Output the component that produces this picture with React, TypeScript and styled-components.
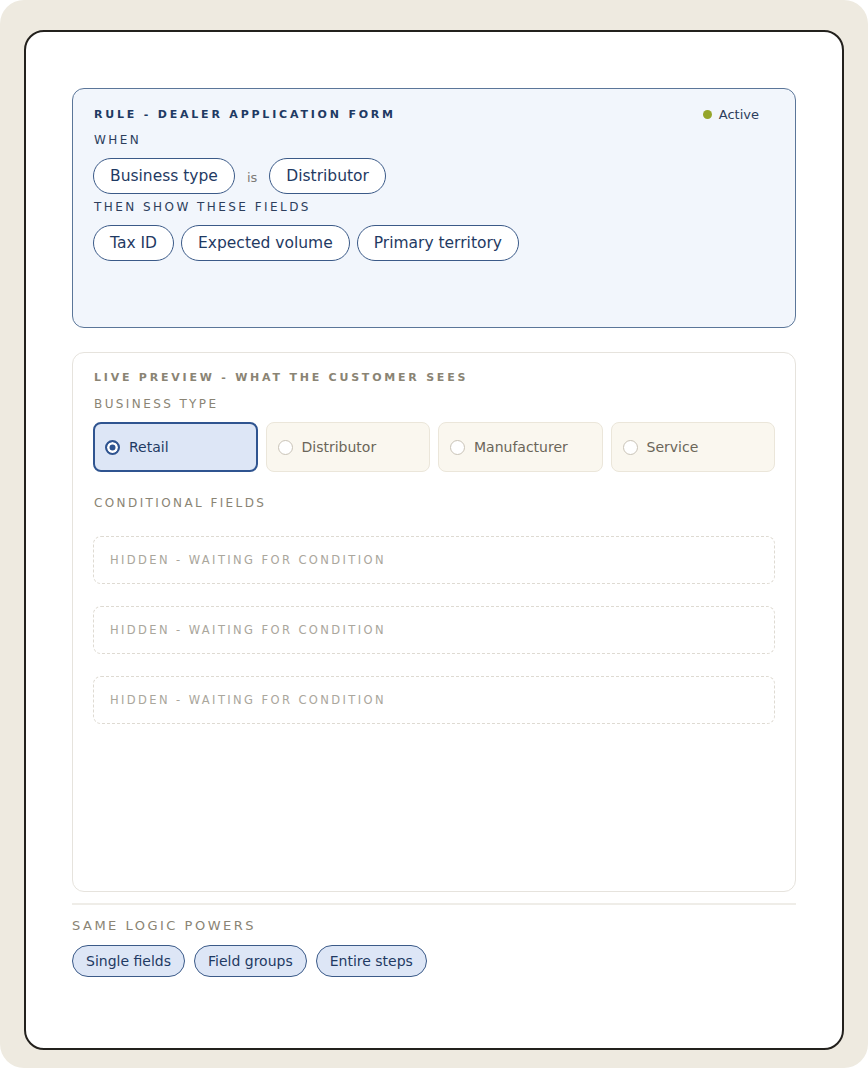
import React from 'react'
import styled, { createGlobalStyle } from 'styled-components'

const GlobalStyle = createGlobalStyle`
  html, body {
    margin: 0;
    padding: 0;
    background: #ffffff;
  }
  body {
    font-family: "DejaVu Sans", Verdana, sans-serif;
  }
  * {
    box-sizing: border-box;
  }
`

const businessTypes = ['Retail', 'Distributor', 'Manufacturer', 'Service']
const conditionFields = ['Business type', 'Distributor']
const thenFields = ['Tax ID', 'Expected volume', 'Primary territory']
const powers = ['Single fields', 'Field groups', 'Entire steps']

export default function App() {
  const selected = 'Retail'

  return (
    <>
      <GlobalStyle />
      <StyledFrame>
        <StyledCard>
          <StyledRulePanel>
            <StyledRuleHeader>
              <StyledRuleTitle>RULE - DEALER APPLICATION FORM</StyledRuleTitle>
              <StyledStatus>
                <StyledStatusDot />
                Active
              </StyledStatus>
            </StyledRuleHeader>

            <StyledRuleLabel>WHEN</StyledRuleLabel>
            <StyledChipRow>
              <StyledRuleChip>{conditionFields[0]}</StyledRuleChip>
              <StyledOperator>is</StyledOperator>
              <StyledRuleChip>{conditionFields[1]}</StyledRuleChip>
            </StyledChipRow>

            <StyledRuleLabel $spaced>THEN SHOW THESE FIELDS</StyledRuleLabel>
            <StyledChipRow $tight>
              {thenFields.map((field) => (
                <StyledRuleChip key={field}>{field}</StyledRuleChip>
              ))}
            </StyledChipRow>
          </StyledRulePanel>

          <StyledPreviewPanel>
            <StyledPreviewTitle>LIVE PREVIEW - WHAT THE CUSTOMER SEES</StyledPreviewTitle>
            <StyledFieldLabel>BUSINESS TYPE</StyledFieldLabel>
            <StyledOptions>
              {businessTypes.map((type) => (
                <StyledOption key={type} $active={type === selected}>
                  <StyledRadio $active={type === selected} />
                  {type}
                </StyledOption>
              ))}
            </StyledOptions>

            <StyledFieldLabel $section>CONDITIONAL FIELDS</StyledFieldLabel>
            <StyledHiddenList>
              {[0, 1, 2].map((i) => (
                <StyledHiddenField key={i}>HIDDEN - WAITING FOR CONDITION</StyledHiddenField>
              ))}
            </StyledHiddenList>
          </StyledPreviewPanel>

          <StyledDivider />

          <StyledPowersLabel>SAME LOGIC POWERS</StyledPowersLabel>
          <StyledPowers>
            {powers.map((p) => (
              <StyledPowerChip key={p}>{p}</StyledPowerChip>
            ))}
          </StyledPowers>
        </StyledCard>
      </StyledFrame>
    </>
  )
}

const StyledFrame = styled.div`
  width: 868px;
  height: 1068px;
  background: #eeeae0;
  border-radius: 24px;
  padding: 30px 24px 18px 24px;
`

const StyledCard = styled.div`
  height: 100%;
  background: #ffffff;
  border: 2px solid #23211d;
  border-radius: 20px;
  padding: 56px 46px 0 46px;
  display: flex;
  flex-direction: column;
`

const StyledRulePanel = styled.section`
  height: 240px;
  background: #f2f6fc;
  border: 1.5px solid #5b7699;
  border-radius: 12px;
  padding: 16px 20px 0 20px;
  display: flex;
  flex-direction: column;
  align-items: flex-start;
`

const StyledRuleHeader = styled.div`
  align-self: stretch;
  display: flex;
  justify-content: space-between;
  align-items: center;
  height: 18px;
  margin-bottom: 10px;
`

const StyledRuleTitle = styled.div`
  font-size: 11px;
  font-weight: 700;
  letter-spacing: 2.8px;
  color: #1f3a63;
  padding-left: 1px;
`

const StyledStatus = styled.div`
  display: flex;
  align-items: center;
  gap: 7px;
  font-size: 13px;
  color: #2d3e5c;
  margin-right: 16px;
`

const StyledStatusDot = styled.span`
  width: 9px;
  height: 9px;
  border-radius: 50%;
  background: #95a52a;
`

const StyledRuleLabel = styled.div<{ $spaced?: boolean }>`
  font-size: 12px;
  line-height: 14px;
  letter-spacing: 2.45px;
  color: #2d3e5c;
  padding-left: 1px;
  margin-top: ${(p) => (p.$spaced ? '6px' : '0')};
  margin-bottom: 11px;
`

const StyledChipRow = styled.div<{ $tight?: boolean }>`
  display: flex;
  align-items: center;
  gap: ${(p) => (p.$tight ? '7px' : '12px')};
`

const StyledRuleChip = styled.span`
  height: 36px;
  display: inline-flex;
  align-items: center;
  padding: 0 16px;
  background: #ffffff;
  border: 1.5px solid #3b5a88;
  border-radius: 18px;
  font-size: 15.5px;
  color: #1f3a63;
`

const StyledOperator = styled.span`
  font-size: 13px;
  color: #7d7b76;
  padding-top: 3px;
`

const StyledPreviewPanel = styled.section`
  margin-top: 24px;
  height: 540px;
  background: #ffffff;
  border: 1.5px solid #e6e3dd;
  border-radius: 12px;
  padding: 17px 20px 0 20px;
  display: flex;
  flex-direction: column;
`

const StyledPreviewTitle = styled.div`
  font-size: 11px;
  line-height: 16px;
  font-weight: 700;
  letter-spacing: 2.78px;
  color: #8a8474;
  padding-left: 1px;
  margin-bottom: 11px;
`

const StyledFieldLabel = styled.div<{ $section?: boolean }>`
  font-size: 12px;
  line-height: 14px;
  letter-spacing: 2.4px;
  color: #8a8474;
  padding-left: 1px;
  margin-top: ${(p) => (p.$section ? '24px' : '0')};
  margin-bottom: ${(p) => (p.$section ? '26px' : '11px')};
`

const StyledOptions = styled.div`
  display: grid;
  grid-template-columns: repeat(4, 1fr);
  gap: 8px;
`

const StyledOption = styled.div<{ $active?: boolean }>`
  height: 50px;
  display: flex;
  align-items: center;
  gap: 9px;
  padding: 0 ${(p) => (p.$active ? '10px' : '11px')};
  border-radius: 8px;
  font-size: 14px;
  background: ${(p) => (p.$active ? '#dde6f6' : '#faf7ef')};
  border: ${(p) => (p.$active ? '2px solid #2f5490' : '1px solid #ebe6da')};
  color: ${(p) => (p.$active ? '#1f3a63' : '#6b6659')};
`

const StyledRadio = styled.span<{ $active?: boolean }>`
  width: 15px;
  height: 15px;
  border-radius: 50%;
  flex-shrink: 0;
  border: ${(p) => (p.$active ? '2px solid #2f5490' : '1.5px solid #c9c3b7')};
  box-shadow: ${(p) => (p.$active ? 'inset 0 0 0 2.5px #ffffff' : 'none')};
  background: ${(p) => (p.$active ? '#2f5490' : '#ffffff')};
`

const StyledHiddenList = styled.div`
  display: flex;
  flex-direction: column;
  gap: 22px;
`

const StyledHiddenField = styled.div`
  height: 48px;
  display: flex;
  align-items: center;
  padding: 0 16px;
  border: 1.5px dashed #dedad2;
  border-radius: 8px;
  font-size: 11.5px;
  letter-spacing: 2.4px;
  color: #aaa69c;
`

const StyledDivider = styled.hr`
  margin: 11px 0 0 0;
  border: none;
  border-top: 2px solid #efede8;
`

const StyledPowersLabel = styled.div`
  margin-top: 13px;
  font-size: 13px;
  line-height: 16px;
  letter-spacing: 2.5px;
  color: #8a8474;
`

const StyledPowers = styled.div`
  margin-top: 11px;
  display: flex;
  gap: 9px;
`

const StyledPowerChip = styled.span`
  height: 32px;
  display: inline-flex;
  align-items: center;
  padding: 0 13px;
  background: #dde6f6;
  border: 1.5px solid #3b5a88;
  border-radius: 16px;
  font-size: 14px;
  color: #1f3a63;
`
